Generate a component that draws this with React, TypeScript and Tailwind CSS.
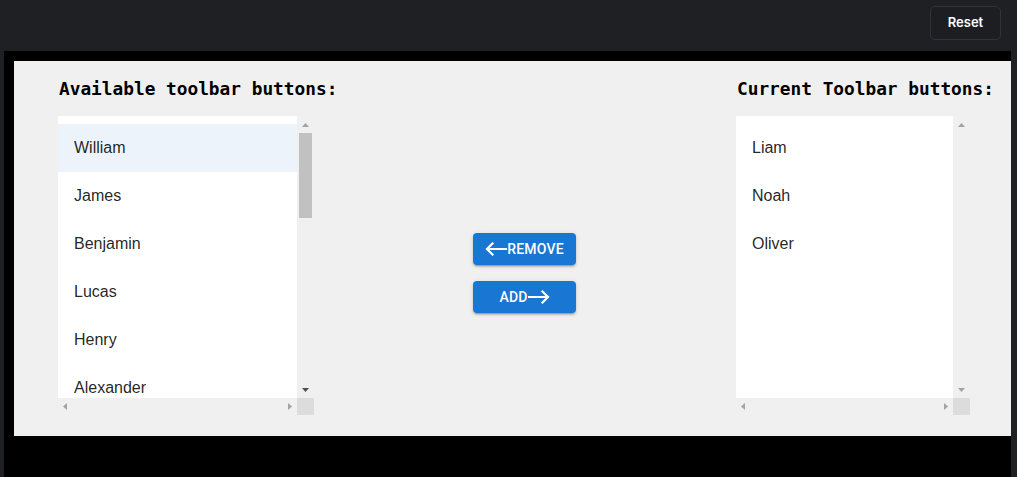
import React, { useState } from 'react'

const available = ['William', 'James', 'Benjamin', 'Lucas', 'Henry', 'Alexander']
const current = ['Liam', 'Noah', 'Oliver']

function Tri({ dir, color }: { dir: 'up' | 'down' | 'left' | 'right'; color: string }) {
  const pts = {
    up: '0,4 3.5,0 7,4',
    down: '0,0 7,0 3.5,4',
    left: '4,0 4,7 0,3.5',
    right: '0,0 0,7 4,3.5',
  }[dir]
  const vertical = dir === 'up' || dir === 'down'
  return (
    <svg width={vertical ? 7 : 4} height={vertical ? 4 : 7} viewBox={vertical ? '0 0 7 4' : '0 0 4 7'}>
      <polygon points={pts} fill={color} />
    </svg>
  )
}

function ArrowLeft() {
  return (
    <svg width="22" height="14" viewBox="0 0 22 14" fill="none" stroke="white" strokeWidth="2.2" strokeLinecap="square">
      <path d="M21 7H2M7.5 1.5L2 7l5.5 5.5" />
    </svg>
  )
}

function ArrowRight() {
  return (
    <svg width="22" height="14" viewBox="0 0 22 14" fill="none" stroke="white" strokeWidth="2.2" strokeLinecap="square">
      <path d="M1 7h19M14.5 1.5L20 7l-5.5 5.5" />
    </svg>
  )
}

function ListBox({
  items,
  width,
  thumb,
  hovered,
}: {
  items: string[]
  width: string
  thumb: boolean
  hovered?: number
}) {
  return (
    <div className="flex flex-col">
      <div className="flex h-[282px]">
        <ul className={`${width} h-full overflow-hidden bg-white pt-2`}>
          {items.map((name, i) => (
            <li
              key={name}
              className={`h-12 px-4 py-3 font-['Liberation_Sans',Arial,sans-serif] text-[16px] leading-6 text-black/[0.87] ${
                i === hovered ? 'bg-[#ecf3fb]' : ''
              }`}
            >
              {name}
            </li>
          ))}
        </ul>
        <div className="flex w-[17px] flex-col items-center bg-[#f0f0f0]">
          <div className="flex h-[17px] items-center justify-center pt-[1px]">
            <Tri dir="up" color="#a3a3a3" />
          </div>
          <div className="w-full flex-1 px-[2px]">
            {thumb && <div className="h-[85px] w-full bg-[#c1c1c1]" />}
          </div>
          <div className="flex h-[17px] items-center justify-center">
            <Tri dir="down" color={thumb ? '#505050' : '#a3a3a3'} />
          </div>
        </div>
      </div>
      <div className="flex h-[17px]">
        <div className={`${width} flex items-center justify-between bg-[#f0f0f0] px-[5px]`}>
          <Tri dir="left" color="#a3a3a3" />
          <Tri dir="right" color="#a3a3a3" />
        </div>
        <div className="w-[17px] bg-[#dcdcdc]" />
      </div>
    </div>
  )
}

export default function App() {
  const [left] = useState(available)
  const [right] = useState(current)

  return (
    <div className="flex h-[477px] w-full flex-col overflow-hidden bg-[#1e2024] font-['Roboto',sans-serif]">
      <div className="flex h-[51px] justify-end pt-[6px] pr-[16px]">
        <button className="h-[34px] w-[71px] rounded-[5px] border border-[#303338] bg-[#1c1e22] font-['Inter',sans-serif] text-[13px] font-semibold text-white">
          Reset
        </button>
      </div>

      <div className="ml-[4px] mr-[6px] flex-1 bg-black pt-[10px] pl-[10px]">
        <div className="flex h-[375px] bg-[#f0f0f0] pl-[44px] pt-[16px]">
          <div className="flex w-[278px] flex-col">
            <h2 className="h-[24px] pl-px font-['DejaVu_Sans_Mono',monospace] text-[17.8px] font-bold leading-6 whitespace-nowrap text-black">
              Available toolbar buttons:
            </h2>
            <div className="mt-[15px]">
              <ListBox items={left} width="w-[239px]" thumb hovered={0} />
            </div>
          </div>

          <div className="ml-[137px] flex w-[103px] flex-col gap-4 pt-[156px]">
            <button className="flex h-8 w-[103px] items-center justify-center rounded-[4px] bg-[#1976d2] text-[14px] font-medium tracking-[0.2px] text-white shadow-[0_3px_1px_-2px_rgba(0,0,0,0.2),0_2px_2px_0_rgba(0,0,0,0.14),0_1px_5px_0_rgba(0,0,0,0.12)]">
              <ArrowLeft />
              REMOVE
            </button>
            <button className="flex h-8 w-[103px] items-center justify-center rounded-[4px] bg-[#1976d2] text-[14px] font-medium tracking-[0.2px] text-white shadow-[0_3px_1px_-2px_rgba(0,0,0,0.2),0_2px_2px_0_rgba(0,0,0,0.14),0_1px_5px_0_rgba(0,0,0,0.12)]">
              ADD
              <ArrowRight />
            </button>
          </div>

          <div className="ml-[160px] flex flex-col">
            <h2 className="h-[24px] pl-px font-['DejaVu_Sans_Mono',monospace] text-[17.8px] font-bold leading-6 whitespace-nowrap text-black">
              Current Toolbar buttons:
            </h2>
            <div className="mt-[15px]">
              <ListBox items={right} width="w-[217px]" thumb={false} />
            </div>
          </div>
        </div>
      </div>
    </div>
  )
}
